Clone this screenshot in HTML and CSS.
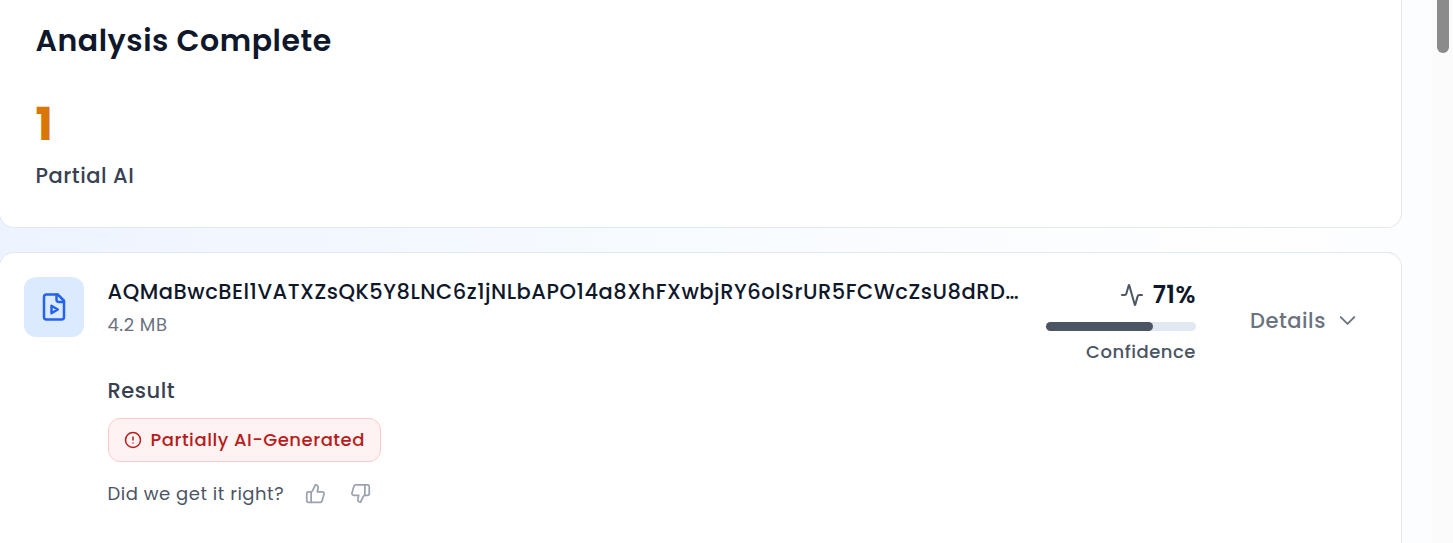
FILE: index.html
```html
<!DOCTYPE html>
<html lang="en">
<head>
    <meta charset="UTF-8">
    <meta name="viewport" content="width=device-width, initial-scale=1.0">
    <title>Analysis Complete</title>
    <link rel="stylesheet" href="styles.css">
</head>
<body>
    <main class="content">
        <section class="card summary">
            <h1 class="summary-title">Analysis Complete</h1>
            <p class="summary-count">1</p>
            <p class="summary-label">Partial AI</p>
        </section>
        <section class="card file">
            <div class="file-icon">
                <svg class="icon" width="30" height="30" viewBox="0 0 24 24">
                    <path d="M15 2H6a2 2 0 0 0-2 2v16a2 2 0 0 0 2 2h12a2 2 0 0 0 2-2V7Z"/>
                    <path d="M14 2v4a2 2 0 0 0 2 2h4"/>
                    <path d="m10 11 5 3-5 3v-6Z"/>
                </svg>
            </div>
            <div class="file-info">
                <h2 class="file-name">AQMaBwcBEl1VATXZsQK5Y8LNC6z1jNLbAPO14a8XhFXwbjRY6olSrUR5FCWcZsU8dRD…</h2>
                <p class="file-size">4.2 MB</p>
                <h3 class="result-title">Result</h3>
                <div class="badge">
                    <svg class="icon" width="18" height="18" viewBox="0 0 24 24">
                        <circle cx="12" cy="12" r="10"/>
                        <path d="M12 8v4M12 16h.01"/>
                    </svg>
                    <span class="badge-text">Partially AI-Generated</span>
                </div>
                <div class="feedback">
                    <span class="feedback-text">Did we get it right?</span>
                    <button class="vote" aria-label="Yes">
                        <svg class="icon" width="21" height="21" viewBox="0 0 24 24">
                            <path d="M7 10v12"/>
                            <path d="M15 5.88 14 10h5.83a2 2 0 0 1 1.92 2.56l-2.33 8A2 2 0 0 1 17.5 22H4a2 2 0 0 1-2-2v-8a2 2 0 0 1 2-2h2.76a2 2 0 0 0 1.79-1.11L12 2a3.13 3.13 0 0 1 3 3.88Z"/>
                        </svg>
                    </button>
                    <button class="vote" aria-label="No">
                        <svg class="icon" width="21" height="21" viewBox="0 0 24 24">
                            <path d="M17 14V2"/>
                            <path d="M9 18.12 10 14H4.17a2 2 0 0 1-1.92-2.56l2.33-8A2 2 0 0 1 6.5 2H20a2 2 0 0 1 2 2v8a2 2 0 0 1-2 2h-2.76a2 2 0 0 0-1.79 1.11L12 22a3.13 3.13 0 0 1-3-3.88Z"/>
                        </svg>
                    </button>
                </div>
            </div>
            <div class="confidence">
                <div class="confidence-value">
                    <svg class="icon" width="24" height="24" viewBox="0 0 24 24">
                        <path d="M22 12h-2.48a2 2 0 0 0-1.93 1.46l-2.35 8.36a.25.25 0 0 1-.48 0L9.24 2.18a.25.25 0 0 0-.48 0l-2.35 8.36A2 2 0 0 1 4.49 12H2"/>
                    </svg>
                    <span>71%</span>
                </div>
                <div class="bar"><div class="bar-fill" style="width: 71%"></div></div>
                <p class="confidence-label">Confidence</p>
            </div>
            <button class="details">
                <span>Details</span>
                <svg class="icon details-chevron" width="27" height="27" viewBox="0 0 24 24">
                    <path d="m6 9 6 6 6-6"/>
                </svg>
            </button>
        </section>
    </main>
    <aside class="scrollbar"><div class="scrollbar-thumb"></div></aside>
</body>
</html>
```
FILE: styles.css
```css
*{
    box-sizing: border-box;
}

body{
    margin: 0;
    height: 100vh;
    display: flex;
    overflow: hidden;
    font-family: Poppins, Inter, "Liberation Sans", sans-serif;
    letter-spacing: .525px;
    background: linear-gradient(90deg, #eef4ff 0%, #f8fbff 50%, #fefeff 85%, #fcfdff 100%);
}

h1, h2, h3, p{
    margin: 0;
    font-weight: 500;
    white-space: nowrap;
}

button{
    padding: 0;
    border: 0;
    background: none;
    font: inherit;
    letter-spacing: inherit;
}

.icon{
    display: block;
    flex-shrink: 0;
    fill: none;
    stroke: currentColor;
    stroke-width: 2;
    stroke-linecap: round;
    stroke-linejoin: round;
}

.content{
    flex: 1;
    display: flex;
    flex-direction: column;
    gap: 24px;
    min-width: 0;
    padding-right: 30px;
}

.card{
    margin-left: -1px;
    background: #fff;
    border: 1px solid #e2e8f0;
    border-radius: 15px;
}

/* summary */
.summary{
    height: 228px;
    flex-shrink: 0;
    padding: 22px 35.5px 0;
    border-top: 0;
    border-radius: 0 0 15px 15px;
}
.summary-title{
    font-size: 30px;
    line-height: 38px;
    font-weight: 600;
    color: #0f172a;
}
.summary-count{
    margin-top: 36px;
    font-size: 46px;
    line-height: 56px;
    font-weight: 700;
    color: #d97706;
}
.summary-label{
    margin-top: 8px;
    font-size: 21px;
    line-height: 32px;
    color: #374151;
}

/* analysed file */
.file{
    flex: 1;
    min-height: 0;
    display: flex;
    align-items: flex-start;
    padding: 24px 46px 0 24px;
    border-bottom: 0;
    border-radius: 15px 15px 0 0;
}
.file-icon{
    display: grid;
    place-items: center;
    width: 60px;
    height: 60px;
    flex-shrink: 0;
    border-radius: 12px;
    background: #dbeafe;
    color: #2563eb;
}
.file-info{
    flex: 1;
    min-width: 0;
    margin-left: 23.5px;
}
.file-name{
    font-size: 21px;
    line-height: 30px;
    color: #0f172a;
}
.file-size{
    margin-top: 4px;
    font-size: 18px;
    line-height: 28px;
    font-weight: 400;
    color: #6b7280;
}
.result-title{
    margin-top: 37px;
    font-size: 21px;
    line-height: 30px;
    color: #374151;
}
.badge{
    display: flex;
    align-items: center;
    gap: 9px;
    width: 273px;
    height: 44px;
    margin-top: 12px;
    padding-left: 15px;
    border: 1px solid #fecaca;
    border-radius: 12px;
    background: #fef2f2;
    color: #b91c1c;
    font-size: 18px;
    font-weight: 500;
    white-space: nowrap;
}
.badge-text{
    padding-bottom: 1px;
}
.feedback{
    display: flex;
    align-items: center;
    height: 30px;
    margin-top: 16px;
    font-size: 18px;
    color: #4b5563;
    white-space: nowrap;
}
.feedback-text{
    width: 197px;
}
.vote{
    margin-right: 24px;
    color: #9ca3af;
}

.confidence{
    width: 150px;
    flex-shrink: 0;
    margin-left: 24px;
    color: #4b5563;
}
.confidence-value{
    display: flex;
    align-items: center;
    justify-content: flex-end;
    gap: 9px;
    height: 36px;
}
.confidence-value span{
    padding-bottom: 2px;
    font-size: 24px;
    font-weight: 600;
    color: #0f172a;
}
.bar{
    height: 9px;
    margin-top: 9px;
    border-radius: 5px;
    background: #e2e8f0;
}
.bar-fill{
    height: 100%;
    border-radius: 5px;
    background: #4b5563;
}
.confidence-label{
    margin-top: 7px;
    font-size: 18px;
    line-height: 28px;
    text-align: right;
}

.details{
    display: flex;
    align-items: center;
    justify-content: space-between;
    width: 110.5px;
    height: 36px;
    flex-shrink: 0;
    margin: 25px -5.5px 0 54px;
    font-size: 21px;
    font-weight: 500;
    color: #6b7280;
}
.details-chevron{
    margin-top: 1px;
    stroke-width: 1.7;
}

/* page scrollbar */
.scrollbar{
    width: 21px;
    padding-left: 5px;
    background: #fbfbfb;
}
.scrollbar-thumb{
    width: 12px;
    height: 53px;
    border-radius: 0 0 6px 6px;
    background: #8b8b8b;
}
```
